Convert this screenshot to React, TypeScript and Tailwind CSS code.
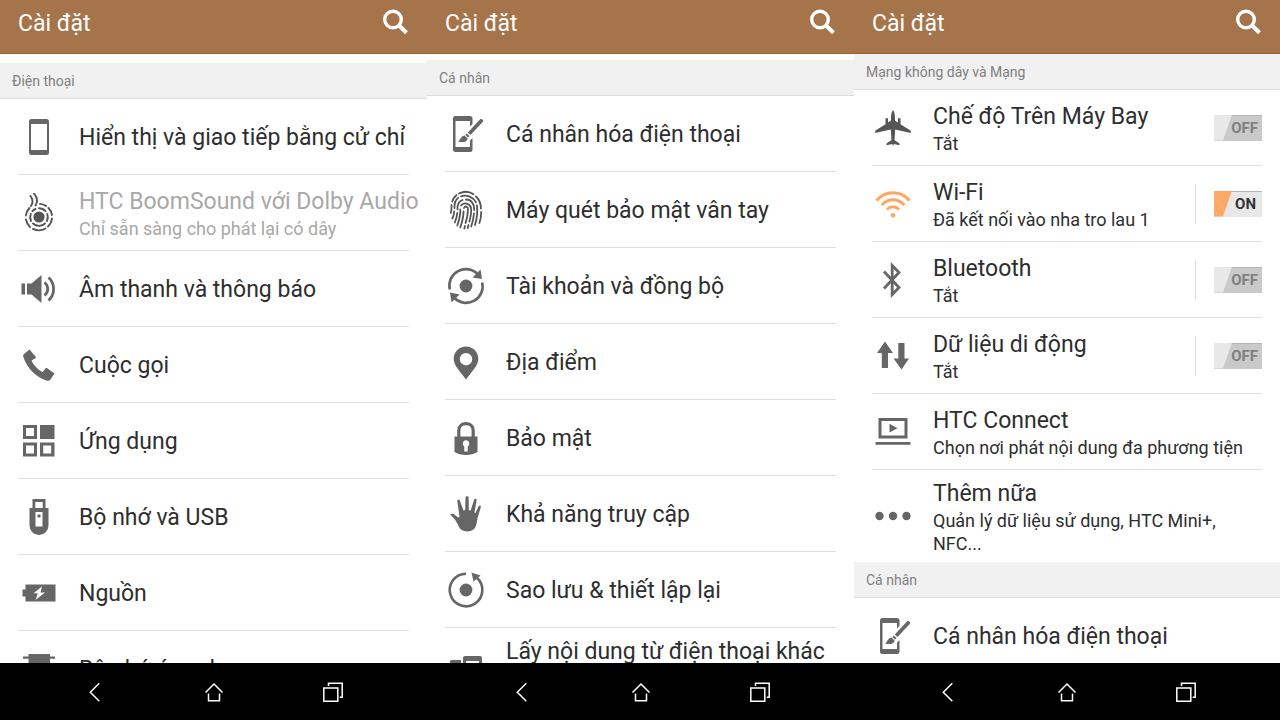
import type { ReactNode } from "react";

type Item = {
  title: string;
  detail?: string;
  icon: ReactNode;
  disabled?: boolean;
  toggle?: "on" | "off";
  split?: boolean;
  tall?: boolean;
};

type Section = {
  heading: string;
  items: Item[];
};

type PanelProps = {
  sections: Section[];
  scrollGap: string;
};

function Icon({ children, className = "text-[#666]" }: { children: ReactNode; className?: string }) {
  return (
    <svg
      className={`h-10 w-10 shrink-0 ${className}`}
      viewBox="0 0 40 40"
      fill="currentColor"
      aria-hidden="true"
    >
      {children}
    </svg>
  );
}

const phoneIcon = (
  <Icon>
    <path
      fillRule="evenodd"
      d="M12.500 2h15a2.500 2.500 0 0 1 2.500 2.500v31a2.500 2.500 0 0 1-2.500 2.500h-15a2.500 2.500 0 0 1-2.500-2.500v-31a2.500 2.500 0 0 1 2.500-2.500zM12 7v26h16V7z"
    />
  </Icon>
);

const boomSoundIcon = (
  <Icon className="text-[#555]">
    <circle cx="20" cy="24" r="5.600" />
    <g fill="none" stroke="currentColor" strokeWidth="1.900" strokeLinecap="round">
      <path d="M20 15.200a8.800 8.800 0 0 1 6.500 2.900M28.300 21a8.800 8.800 0 0 1-.4 7M26 30.500a8.800 8.800 0 0 1-12 0M12 28a8.800 8.800 0 0 1-.2-7.200M13.500 18a8.800 8.800 0 0 1 3-2" />
      <path d="M21 10.900a13.200 13.200 0 0 1 6 2M29.500 15a13.200 13.200 0 0 1 3.500 7M33 25.500a13.200 13.200 0 0 1-4 8M26.500 35.500a13.200 13.200 0 0 1-12.500.4M11 34a13.200 13.200 0 0 1-4-7.500M6.900 22.500a13.200 13.200 0 0 1 3.500-7.500" />
      <path d="M15 .5c3 3.500 4 8 1.500 12M11.500 3c2.500 3.500 3 6.500.5 10" />
    </g>
  </Icon>
);

const soundIcon = (
  <Icon>
    <path d="M2.500 14.500H6v11H2.500zM8 14.500h4.500L22.500 6v28l-10-8.500H8z" />
    <g fill="none" stroke="currentColor" strokeWidth="2.800">
      <path d="M25.500 13.500a8.200 8.200 0 0 1 0 13M29.500 8.500a15.500 15.500 0 0 1 0 23" />
    </g>
  </Icon>
);

const callIcon = (
  <Icon>
    <path d="M10.500 4.500 16.500 11.500C17 12.200 17 12.800 16.400 13.300L12.500 15.500C14.500 20 19 24.800 23.500 27L26.500 23.500C27 23 27.600 22.900 28.200 23.300L35.500 28.500 31.500 34.500C30.500 35.900 29 36 27.400 35.500 17 32.500 8 22.500 4.500 12.500 4 11 4 10 5 9z" />
  </Icon>
);

const appsIcon = (
  <Icon>
    <path
      fillRule="evenodd"
      d="M4 4h14v14H4zM7 7v8h8V7zM21 4h14.500v14H21zM4 21.500h14v14H4zM7 24.500v8h8v-8zM21 21.500h14.500v14H21zM24.200 24.500v8h8v-8z"
    />
  </Icon>
);

const usbIcon = (
  <Icon>
    <path
      fillRule="evenodd"
      d="M13.500 2h13v9h3v17.500a9.500 9.500 0 0 1-19 0V11h3zM16.300 5v6h7.400V5zM16.500 15v14.500h7V15z"
    />
    <path d="M18.500 17.500h3v3h-3z" />
  </Icon>
);

const powerIcon = (
  <Icon>
    <path
      fillRule="evenodd"
      d="M6.500 11.500h30v17h-30v-5H3.500v-7h3zM23 13.500l-8.500 6.700h4.300L16.500 27l9.500-7.500h-4.500z"
    />
  </Icon>
);

const memoryIcon = (
  <Icon>
    <path d="M9.500 5h21.500v30H9.500zM4 7.500h32v2.200H4zM4 14h32v2.200H4zM4 20.500h32v2.200H4zM4 27h32v2.200H4z" />
  </Icon>
);

const personalizeIcon = (
  <Icon>
    <path d="M9.500 2H24a2.500 2.500 0 0 1 2.500 2.500v5.500L24 12.500V7H9.500v26H24v-6.500l2.500-2.500v11.500A2.500 2.500 0 0 1 24 38H9.500A2.500 2.500 0 0 1 7 35.500v-31A2.500 2.500 0 0 1 9.500 2z" />
    <path d="M34.200 5.200c1.300-1 3.800.7 2.700 2.600L24.500 21l-2.700-2.500zM20.800 19.500l2.700 2.500-1.300 1.400-2.900-2.400zM18.400 21.500l3.100 2.700c.2 3.500-4.500 5-9.500 3 2.500-.7 2.500-5 6.400-5.700z" />
  </Icon>
);

const fingerprintIcon = (
  <Icon className="text-[#555]">
    <g fill="none" stroke="currentColor" strokeWidth="1.800" strokeLinecap="round">
      <path d="M13 3.500c5-2.500 10.500-2 14.500.8M30 6.500c3 3 5 7 5 12M35.200 22c0 4-.6 8-1.800 11M10.500 5C8.500 6.800 7 9 6.300 11.500M5.500 15c0 3.500 0 6-.8 8" />
      <path d="M15 6.300c6-1.800 12.200.8 15 6M31 15.500c.8 7-.1 13.500-2 19.500M12 8c-3.300 2.500-3.700 6-3.500 10M8.200 21.500c-.2 2.500-.8 5-1.800 7" />
      <path d="M20 9.500c5 0 8.500 4 8.300 10.500M28 23.500c-.4 5-1.500 9-2.800 13M16.500 10c-4 1.600-5.500 5-5 9.500M11.300 23c-.2 3.500-1.200 6.500-2.500 9.500" />
      <path d="M15 15.500c3-4 9-2 10 2.500.8 4.500-.6 9.500-1.600 13.500M22.500 35l-.8 3M14.300 19.500c.2 5.500-1.200 11-3 16" />
      <path d="M18 18c1-2.500 4-1.700 4 1.500 0 4-1 9-2.400 13.500M19 36l-.7 2.500M17.500 21.500c0 5.500-1.500 11-3.200 16" />
    </g>
  </Icon>
);

const syncIcon = (
  <Icon>
    <circle cx="20" cy="20" r="6.400" />
    <g fill="none" stroke="currentColor" strokeWidth="2.600">
      <path d="M3.800 23.500A16.500 16.500 0 0 1 32 8.500M36.200 16.500A16.500 16.500 0 0 1 8 31.500" />
    </g>
    <path d="M34.500 3.500 36 13 26.500 11.500zM4 26.500l9.500 2L5.500 36.500z" />
  </Icon>
);

const pinIcon = (
  <Icon>
    <path
      fillRule="evenodd"
      d="M20 4.500A12.300 12.300 0 0 1 32.300 16.800C32.300 24 26 29 20 37.500 14 29 7.700 24 7.700 16.800A12.300 12.300 0 0 1 20 4.500zM20 11a6.200 6.200 0 1 0 0 12.400A6.200 6.200 0 0 0 20 11z"
    />
  </Icon>
);

const lockIcon = (
  <Icon>
    <path d="M12.800 19v-6.500c0-9.300 14.400-9.300 14.400 0V19" fill="none" stroke="currentColor" strokeWidth="3.200" />
    <path
      fillRule="evenodd"
      d="M8.500 18.500h23v15.500c-6 4-17 4-23 0zM20 22.300a3.300 3.300 0 0 0-1.700 6.100V33.500h3.400v-5.100A3.300 3.300 0 0 0 20 22.300z"
    />
  </Icon>
);

const handIcon = (
  <Icon>
    <path d="M5 20c2.500-1 4.500 1.700 7 3.300.8.500 1.600.1 1.500-1L11.300 7c-.2-1.600 2-2.100 2.500-.5L17.500 16.500l1.700-.4.300-12.600c.1-1.700 3-1.700 3.100 0l.2 12.700 1.800.4L28.200 5.600c.6-1.500 2.700-.9 2.400.7L28.500 18.500l.8.800 3.400-7c.8-1.400 2.600-.5 2.100 1L31.500 24c-.8 5-1.300 9-3.500 11-3 3.200-10.500 3.200-13.500 0C12 32 10 25 5 21.500c-.8-.6-.6-1.200 0-1.500z" />
  </Icon>
);

const backupIcon = (
  <Icon>
    <circle cx="20" cy="20" r="6.400" />
    <path d="M20 3.700A16.300 16.300 0 1 0 30.500 7.500" fill="none" stroke="currentColor" strokeWidth="2.600" />
    <path d="M25.500 2.500 34.500 5.500 27.500 11.500z" />
  </Icon>
);

const transferIcon = (
  <Icon>
    <path
      fillRule="evenodd"
      d="M19 2h15a2 2 0 0 1 2 2v32a2 2 0 0 1-2 2H19a2 2 0 0 1-2-2V4a2 2 0 0 1 2-2zM20 7v26h13V7z"
    />
    <path d="M5.500 6H15v32H5.500A1.500 1.500 0 0 1 4 36.500v-29A1.500 1.500 0 0 1 5.500 6z" />
  </Icon>
);

const airplaneIcon = (
  <Icon className="text-[#555]">
    <path d="M20 2c1.300 1.500 2 4.500 2 8v2.500l3 2V10.200h2.500v6L37.500 22.500 38 25l-15.800-3.600L21.500 32l5 3.500v1.700L20.800 36 20 38l-.8-2-5.700 1.200v-1.700l5-3.500-.7-10.600L2 25l.5-2.500L12.500 16.200v-6H15v4.300l3-2V10c0-3.500.7-6.500 2-8z" />
  </Icon>
);

const wifiIcon = (
  <Icon className="text-[#ffa75e]">
    <circle cx="20" cy="31.300" r="2.300" />
    <g fill="none" stroke="currentColor" strokeWidth="3">
      <path d="M3.500 16.500c9-10.500 24-10.500 33 0M8.800 21c6-7 16.400-7 22.400 0M14 25.500c3.500-3.700 8.500-3.700 12 0" />
    </g>
  </Icon>
);

const bluetoothIcon = (
  <Icon>
    <path d="M11 11.500 26 27.500 19.200 34.500V5.500L26 12.500 11 28.500" fill="none" stroke="currentColor" strokeWidth="2.800" />
  </Icon>
);

const dataIcon = (
  <Icon>
    <path d="M12 5.500 20 17h-5v15H8.800V17H4zM25.300 7h6.200v15.500H36L28.500 33.500 20.500 22.500h4.800z" />
  </Icon>
);

const connectIcon = (
  <Icon>
    <path
      fillRule="evenodd"
      d="M5.500 6h29v20.500h-29zM8.500 9v14.500h23V9zM2.500 30h35v2.800h-35z"
    />
    <path d="M16.500 11.800 24.500 16.200 16.500 20.600z" />
  </Icon>
);

const moreIcon = (
  <Icon>
    <circle cx="6.500" cy="20" r="4.200" />
    <circle cx="20" cy="20" r="4.200" />
    <circle cx="33.500" cy="20" r="4.200" />
  </Icon>
);

const personalize: Item = { title: "Cá nhân hóa điện thoại", icon: personalizeIcon };

const panels: PanelProps[] = [
  {
    scrollGap: "pt-[9px]",
    sections: [
      {
        heading: "Điện thoại",
        items: [
          { title: "Hiển thị và giao tiếp bằng cử chỉ", icon: phoneIcon },
          {
            title: "HTC BoomSound với Dolby Audio",
            detail: "Chỉ sẵn sàng cho phát lại có dây",
            icon: boomSoundIcon,
            disabled: true,
          },
          { title: "Âm thanh và thông báo", icon: soundIcon },
          { title: "Cuộc gọi", icon: callIcon },
          { title: "Ứng dụng", icon: appsIcon },
          { title: "Bộ nhớ và USB", icon: usbIcon },
          { title: "Nguồn", icon: powerIcon },
          { title: "Bộ nhớ ứng dụng", icon: memoryIcon },
        ],
      },
    ],
  },
  {
    scrollGap: "pt-[6px]",
    sections: [
      {
        heading: "Cá nhân",
        items: [
          personalize,
          { title: "Máy quét bảo mật vân tay", icon: fingerprintIcon },
          { title: "Tài khoản và đồng bộ", icon: syncIcon },
          { title: "Địa điểm", icon: pinIcon },
          { title: "Bảo mật", icon: lockIcon },
          { title: "Khả năng truy cập", icon: handIcon },
          { title: "Sao lưu & thiết lập lại", icon: backupIcon },
          { title: "Lấy nội dung từ điện thoại khác", icon: transferIcon, tall: true },
        ],
      },
    ],
  },
  {
    scrollGap: "pt-0",
    sections: [
      {
        heading: "Mạng không dây và Mạng",
        items: [
          { title: "Chế độ Trên Máy Bay", detail: "Tắt", icon: airplaneIcon, toggle: "off" },
          {
            title: "Wi-Fi",
            detail: "Đã kết nối vào nha tro lau 1",
            icon: wifiIcon,
            toggle: "on",
            split: true,
          },
          { title: "Bluetooth", detail: "Tắt", icon: bluetoothIcon, toggle: "off", split: true },
          { title: "Dữ liệu di động", detail: "Tắt", icon: dataIcon, toggle: "off", split: true },
          {
            title: "HTC Connect",
            detail: "Chọn nơi phát nội dung đa phương tiện",
            icon: connectIcon,
          },
          {
            title: "Thêm nữa",
            detail: "Quản lý dữ liệu sử dụng, HTC Mini+, NFC...",
            icon: moreIcon,
          },
        ],
      },
      { heading: "Cá nhân", items: [personalize] },
    ],
  },
];

function Toggle({ label, defaultOn }: { label: string; defaultOn: boolean }) {
  return (
    <label className="relative block h-[26px] w-12 shrink-0 cursor-pointer">
      <input
        type="checkbox"
        role="switch"
        aria-label={label}
        defaultChecked={defaultOn}
        className="peer absolute inset-0 h-full w-full cursor-pointer appearance-none border-t border-[#b5b5b5] bg-[#c9c9c9] checked:bg-[#e8e8e8]"
      />
      <span className="pointer-events-none absolute inset-y-0 left-0 w-[18px] bg-[#e8e8e8] [clip-path:polygon(0_0,100%_0,50%_100%,0_100%)] peer-checked:bg-[#ffa966]" />
      <span className="pointer-events-none absolute inset-y-0 right-1 flex items-center pt-0.5 text-[15px] font-bold leading-none text-[#808080] peer-checked:hidden">
        OFF
      </span>
      <span className="pointer-events-none absolute inset-y-0 right-1.5 hidden items-center pt-0.5 text-[15px] font-bold leading-none text-[#333] peer-checked:flex">
        ON
      </span>
    </label>
  );
}

function Row({ item }: { item: Item }) {
  return (
    <li
      className={`mx-[18px] flex items-center border-b border-[#dedede] last:border-b-0 ${
        item.tall ? "min-h-[92px]" : "min-h-[76px]"
      }`}
    >
      <button
        type="button"
        disabled={item.disabled}
        className="flex min-w-0 flex-1 items-center gap-5 self-stretch pl-px text-left"
      >
        {item.icon}
        <span
          className={`min-w-0 flex-1 py-[7px] ${item.tall ? "self-start" : ""} ${
            item.disabled ? "text-[#a8a8a8]" : "text-[#2e2e2e]"
          }`}
        >
          <span className="block whitespace-nowrap pt-0.5 text-[23px] leading-[30px]">{item.title}</span>
          {item.detail && <span className="block text-lg leading-[23px]">{item.detail}</span>}
        </span>
      </button>
      {item.toggle && (
        <div className={`flex h-10 items-center pl-[18px] ${item.split ? "border-l border-[#dedede]" : ""}`}>
          <Toggle label={item.title} defaultOn={item.toggle === "on"} />
        </div>
      )}
    </li>
  );
}

function NavIcon({ d }: { d: string }) {
  return (
    <svg
      className="h-5 w-5"
      viewBox="0 0 20 20"
      fill="none"
      stroke="currentColor"
      strokeWidth="1.500"
      aria-hidden="true"
    >
      <path d={d} />
    </svg>
  );
}

function SystemNav() {
  return (
    <nav className="flex h-[57px] shrink-0 items-center justify-center gap-[99px] bg-black text-white">
      <button type="button" aria-label="Quay lại">
        <NavIcon d="M14.300 1.200 5.300 10.200l9 9" />
      </button>
      <button type="button" aria-label="Màn hình chính">
        <NavIcon d="M1.500 10.500 10 2l8.500 8.500M4.500 11.500v7.300h11v-7.300" />
      </button>
      <button type="button" aria-label="Ứng dụng gần đây">
        <NavIcon d="M.8 6h14v13.200H.8zM5.500 4V1.300h13.700v14h-2.500" />
      </button>
    </nav>
  );
}

function Panel({ sections, scrollGap }: PanelProps) {
  return (
    <section className="flex h-full min-w-0 flex-col overflow-hidden">
      <header className="flex h-[54px] shrink-0 items-center justify-between border-b border-[#99632f] bg-[#a5744a] px-[18px] pb-2 text-white">
        <h1 className="pt-0.5 text-[23px] leading-[30px]">Cài đặt</h1>
        <button type="button" aria-label="Tìm kiếm">
          <svg className="h-7 w-7" viewBox="0 0 28 28" fill="none" stroke="currentColor" aria-hidden="true">
            <circle cx="12" cy="10.500" r="8.300" strokeWidth="3.400" />
            <path d="M17.800 16.300 25.500 23.700" strokeWidth="4" />
          </svg>
        </button>
      </header>
      <div className={`min-h-0 flex-1 overflow-hidden ${scrollGap}`}>
        {sections.map((section) => (
          <div key={section.heading}>
            <h2 className="flex h-9 items-center border-b border-[#dedede] bg-[#f1f1f1] px-3 text-sm text-[#808080]">
              {section.heading}
            </h2>
            <ul>
              {section.items.map((item) => (
                <Row key={item.title} item={item} />
              ))}
            </ul>
          </div>
        ))}
      </div>
      <SystemNav />
    </section>
  );
}

export default function App() {
  return (
    <main className="grid h-screen grid-cols-[427fr_427fr_426fr] bg-white font-['Roboto','Noto_Sans',sans-serif]">
      {panels.map((panel) => (
        <Panel key={panel.sections[0].heading} {...panel} />
      ))}
    </main>
  );
}
